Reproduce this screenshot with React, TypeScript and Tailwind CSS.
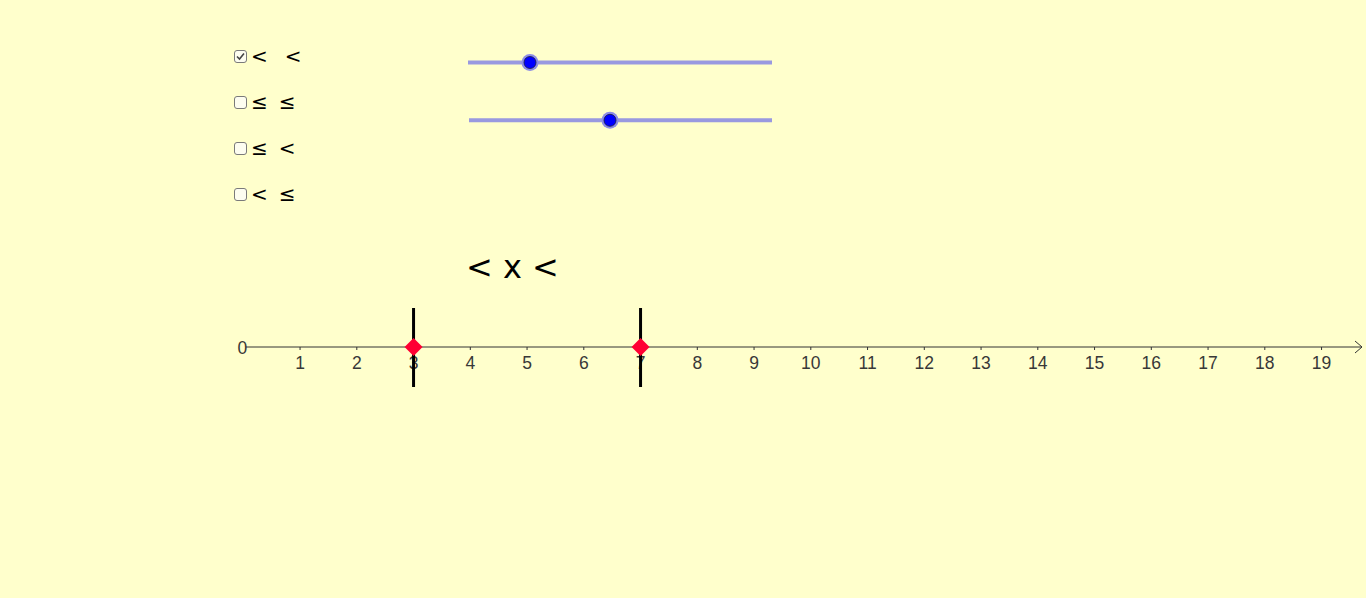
import React from "react";

// Graphics view: checkbox toggles, two sliders, the inequality caption and a number line.
const ORIGIN_X = 243.3;
const UNIT = 56.75;
const AXIS_Y = 347;

const toX = (v: number) => ORIGIN_X + v * UNIT;

const options = [
  { left: "<", right: "<", gap: "ml-[13px]", checked: true },
  { left: "≤", right: "≤", gap: "ml-[7px]", checked: false },
  { left: "≤", right: "<", gap: "ml-[7px]", checked: false },
  { left: "<", right: "≤", gap: "ml-[7px]", checked: false },
];

const sliders = [
  { y: 62.5, x1: 468, x2: 772, knob: 530 },
  { y: 120.3, x1: 469, x2: 772, knob: 610 },
];

const endpoints = [3, 7];

function CheckBox({ checked }: { checked: boolean }) {
  return (
    <span className="flex h-[13px] w-[13px] items-center justify-center rounded-[3px] border border-[#7a7a7a] bg-[#fdfdf0]">
      {checked && (
        <svg width="11" height="11" viewBox="0 0 11 11">
          <path d="M2 5.5 L4.5 8 L9 2.5" fill="none" stroke="#444" strokeWidth="1.6" />
        </svg>
      )}
    </span>
  );
}

export default function App() {
  const ticks = Array.from({ length: 19 }, (_, i) => i + 1);

  return (
    <div className="relative h-[598px] w-[1366px] overflow-hidden bg-[#ffffcc] font-['DejaVu_Sans',sans-serif] text-black">
      <svg className="absolute left-0 top-0" width="1366" height="598">
        {sliders.map((s, i) => (
          <g key={i}>
            <line x1={s.x1} y1={s.y} x2={s.x2} y2={s.y} stroke="#9999e0" strokeWidth="4" />
            <circle cx={s.knob} cy={s.y} r="8.5" fill="#8c8ce6" />
            <circle cx={s.knob} cy={s.y} r="6" fill="#0000ff" stroke="#1a1a40" strokeWidth="0.8" />
          </g>
        ))}

        <line x1="246" y1={AXIS_Y} x2="1362" y2={AXIS_Y} stroke="#333" strokeWidth="1" />
        <path d={`M1355 ${AXIS_Y - 6} L1362 ${AXIS_Y} L1355 ${AXIS_Y + 6}`} fill="none" stroke="#333" strokeWidth="1" />
        {ticks.map((t) => (
          <g key={t}>
            <line x1={toX(t)} y1={AXIS_Y} x2={toX(t)} y2={AXIS_Y + 3} stroke="#333" strokeWidth="1" />
            <text
              x={toX(t)}
              y="369"
              textAnchor="middle"
              fill="#383838"
              fontSize="17.5"
              fontFamily="'Liberation Sans', Arial, sans-serif"
            >
              {t}
            </text>
          </g>
        ))}
        <text x="237.5" y="354" fill="#383838" fontSize="17.5" fontFamily="'Liberation Sans', Arial, sans-serif">
          0
        </text>

        {endpoints.map((v) => (
          <g key={v}>
            <line x1={toX(v)} y1="308" x2={toX(v)} y2="387" stroke="#000" strokeWidth="3" />
            <path
              d={`M${toX(v)} ${AXIS_Y - 9} L${toX(v) + 9} ${AXIS_Y} L${toX(v)} ${AXIS_Y + 9} L${toX(v) - 9} ${AXIS_Y} Z`}
              fill="#ff0033"
            />
          </g>
        ))}
      </svg>

      <div className="absolute left-[234px] top-[33px] flex flex-col">
        {options.map((o, i) => (
          <div key={i} className="flex h-[46px] items-center gap-[4px] text-[20px] leading-none">
            <CheckBox checked={o.checked} />
            <span>{o.left}</span>
            <span className={o.gap}>{o.right}</span>
          </div>
        ))}
      </div>

      <div className="absolute left-[466px] top-[251px] whitespace-pre text-[32px] leading-none">
        {"< x <"}
      </div>
    </div>
  );
}
